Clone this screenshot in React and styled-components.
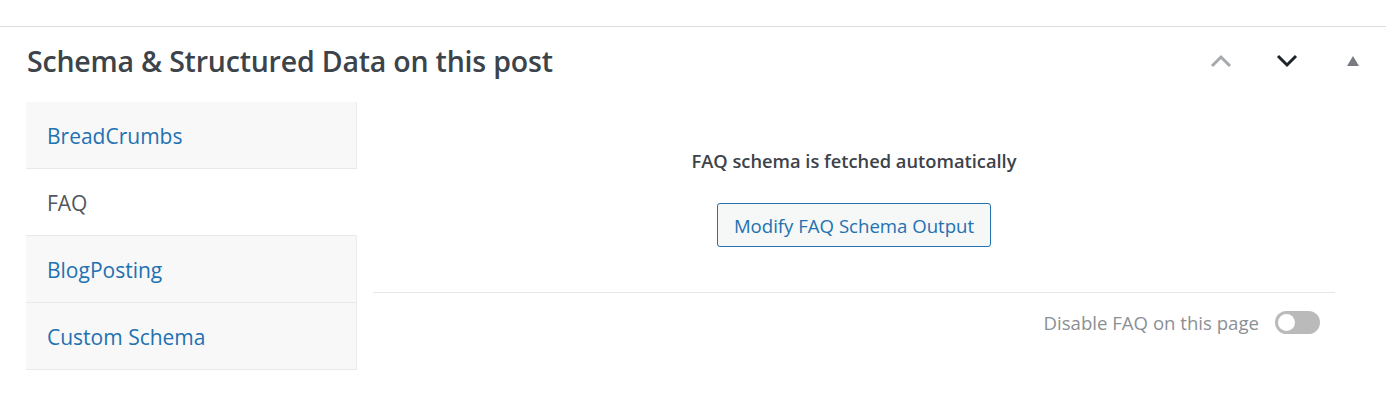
import React from "react";
import styled, { createGlobalStyle } from "styled-components";

const Global = createGlobalStyle`
  html, body { margin: 0; padding: 0; background: #fff; }
  body { font-family: "Open Sans", "Noto Sans", sans-serif; }
  * { box-sizing: border-box; }
`;

const Page = styled.div`
  padding-top: 26px;
  width: 1386px;
`;

const Box = styled.section`
  border-top: 1px solid #dcdcde;
`;

const Header = styled.div`
  display: flex;
  align-items: center;
  height: 75px;
  padding-left: 27px;
  padding-bottom: 7px;
`;

const Title = styled.h2`
  margin: 0;
  flex: 1;
  font-size: 28.5px;
  font-weight: 600;
  color: #3c434a;
  letter-spacing: -0.2px;
`;

const Controls = styled.div`
  display: flex;
  align-self: stretch;
`;

const IconBtn = styled.button`
  width: 66px;
  border: 0;
  background: transparent;
  padding: 0;
  display: flex;
  align-items: center;
  justify-content: center;
  color: ${(p) => p.$color};
  cursor: pointer;
`;

const Body = styled.div`
  display: flex;
  padding-left: 26px;
  padding-right: 35px;
`;

const Tabs = styled.ul`
  list-style: none;
  margin: 0;
  padding: 0;
  width: 331px;
  flex: none;
`;

const Tab = styled.li`
  height: 67px;
  display: flex;
  align-items: center;
  padding-left: 21px;
  padding-top: 2px;
  font-size: 21px;
  background: ${(p) => (p.$active ? "#fff" : "#f8f8f8")};
  color: ${(p) => (p.$active ? "#50575e" : "#2271b1")};
  border-bottom: 1px solid #e9e9e9;
  border-right: 1px solid ${(p) => (p.$active ? "#fff" : "#ececec")};
`;

const Content = styled.div`
  flex: 1;
  padding: 0 16px;
  display: flex;
  flex-direction: column;
  align-items: center;
`;

const Note = styled.p`
  margin: 46px 0 0;
  font-size: 18.3px;
  font-weight: 600;
  color: #3c434a;
  line-height: 26px;
`;

const Button = styled.button`
  margin-top: 29px;
  height: 44px;
  padding: 0 16px;
  border: 1px solid #2271b1;
  border-radius: 3px;
  background: #f6f7f7;
  color: #2271b1;
  font-family: inherit;
  font-size: 18.6px;
  cursor: pointer;
`;

const Divider = styled.hr`
  align-self: stretch;
  margin: 45px 0 0;
  border: 0;
  border-top: 1px solid #e6e6e6;
`;

const ToggleRow = styled.label`
  align-self: stretch;
  display: flex;
  justify-content: flex-end;
  align-items: center;
  gap: 16px;
  margin-top: 17px;
  padding-right: 15px;
  font-size: 18.6px;
  color: #8c8f94;
`;

const Switch = styled.span`
  width: 45px;
  height: 23px;
  border-radius: 12px;
  background: #bababa;
  display: flex;
  align-items: center;
  padding-left: 3px;
  &::before {
    content: "";
    width: 17px;
    height: 17px;
    border-radius: 50%;
    background: #fff;
  }
`;

export default function App() {
  return (
    <Page>
      <Global />
      <Box>
        <Header>
          <Title>Schema &amp; Structured Data on this post</Title>
          <Controls>
            <IconBtn $color="#a7aaad" aria-label="Move up">
              <svg width="22" height="14" viewBox="0 0 22 14">
                <path d="M2 12 L11 3 L20 12" fill="none" stroke="currentColor" strokeWidth="3" />
              </svg>
            </IconBtn>
            <IconBtn $color="#1d2327" aria-label="Move down">
              <svg width="22" height="14" viewBox="0 0 22 14">
                <path d="M2 2 L11 11 L20 2" fill="none" stroke="currentColor" strokeWidth="3" />
              </svg>
            </IconBtn>
            <IconBtn $color="#787c82" aria-label="Toggle panel">
              <svg width="14" height="12" viewBox="0 0 14 12">
                <path d="M7 1 L13 11 L1 11 Z" fill="currentColor" />
              </svg>
            </IconBtn>
          </Controls>
        </Header>
        <Body>
          <Tabs>
            <Tab>BreadCrumbs</Tab>
            <Tab $active>FAQ</Tab>
            <Tab>BlogPosting</Tab>
            <Tab>Custom Schema</Tab>
          </Tabs>
          <Content>
            <Note>FAQ schema is fetched automatically</Note>
            <Button>Modify FAQ Schema Output</Button>
            <Divider />
            <ToggleRow>
              Disable FAQ on this page
              <Switch />
            </ToggleRow>
          </Content>
        </Body>
      </Box>
    </Page>
  );
}
